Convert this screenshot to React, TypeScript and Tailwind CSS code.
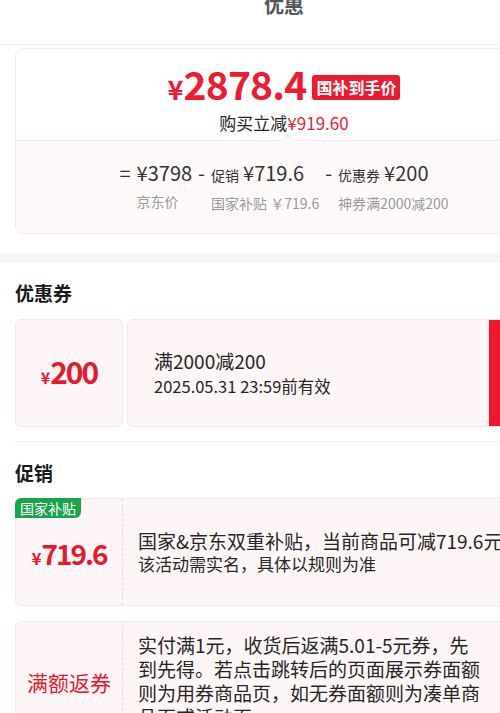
import React from 'react';

const red = 'text-[#f0192f]';

function PriceCard() {
  return (
    <div className="mx-[15px] mt-[3px] overflow-hidden rounded-[8px] border border-[#f6e9e9]">
      <div className="flex flex-col items-center bg-white pt-[12px] pb-[5px]">
        <div className="flex items-center">
          <div className={`flex items-baseline font-semibold ${red}`}>
            <span className="text-[27px] leading-[44px]">¥</span>
            <span className="text-[39px] leading-[44px] tracking-[-0.8px]">2878.4</span>
          </div>
          <span className="ml-[6px] mt-[3px] rounded-[3px] bg-[#ee1a2d] px-[4px] text-[16px] leading-[25px] font-bold text-white">
            国补到手价
          </span>
        </div>
        <div className="text-[17px] leading-[24px] text-[#262626]">
          购买立减<span className={red}>¥919.60</span>
        </div>
      </div>
      <div className="relative border-t border-[#f6eded] bg-[#fdf9f9] pt-[18px] pb-[20px]">
        <div className="absolute -top-[5px] left-[268px] h-[8px] w-[8px] rotate-45 border-l border-t border-[#f6eded] bg-[#fdf9f9]" />
        <div className="flex justify-center gap-[6px] text-[#333]">
          <span className="text-[20px] leading-[28px]">=</span>
          <div className="flex flex-col">
            <span className="text-[20px] leading-[28px]">¥3798</span>
            <span className="mt-[4px] text-[14px] leading-[20px] text-[#999]">京东价</span>
          </div>
          <span className="text-[20px] leading-[28px]">-</span>
          <div className="flex flex-col">
            <span className="text-[20px] leading-[28px]">
              <span className="mr-[4px] text-[14px]">促销</span>¥719.6
            </span>
            <span className="mt-[4px] text-[14px] leading-[20px] text-[#999]">国家补贴 ￥719.6</span>
          </div>
          <span className="text-[20px] leading-[28px]">-</span>
          <div className="flex flex-col">
            <span className="text-[20px] leading-[28px]">
              <span className="mr-[4px] text-[14px]">优惠券</span>¥200
            </span>
            <span className="mt-[4px] text-[14px] leading-[20px] text-[#999]">神券满2000减200</span>
          </div>
        </div>
      </div>
    </div>
  );
}

function Coupon() {
  return (
    <div className="mx-[15px] flex h-[108px] gap-[4px]">
      <div className="flex w-[108px] items-baseline justify-center rounded-[6px] border border-[#fbe6e7] bg-[#fef5f6] pt-[34px] text-[#e8192f]">
        <span className="text-[16px] font-semibold leading-[34px]">¥</span>
        <span className="text-[30px] font-semibold leading-[34px] tracking-[-2px]">200</span>
      </div>
      <div className="flex flex-1 overflow-hidden rounded-[6px] border border-[#fbe6e7] bg-[#fef5f6]">
        <div className="flex flex-1 flex-col justify-center pl-[26px] text-[#262626]">
          <span className="text-[19px] leading-[26px]">满2000减200</span>
          <span className="text-[16.5px] leading-[24px]">2025.05.31 23:59前有效</span>
        </div>
        <div className="w-[63px] bg-[#f2162d]" />
      </div>
    </div>
  );
}

function PromoCard({
  badge,
  left,
  children,
  className,
}: {
  badge?: string;
  left: React.ReactNode;
  children: React.ReactNode;
  className?: string;
}) {
  return (
    <div className={`relative mx-[15px] flex min-h-[108px] rounded-[6px] border border-[#f7e8e9] bg-[#fef6f6] ${className ?? ''}`}>
      {badge && (
        <span className="absolute -left-[1px] -top-[1px] rounded-tl-[6px] rounded-br-[6px] bg-[#16a54a] px-[5px] text-[14px] leading-[20px] text-white">
          {badge}
        </span>
      )}
      <div className="flex w-[107px] shrink-0 items-center justify-center border-r border-dashed border-[#ead9da]">
        {left}
      </div>
      {children}
    </div>
  );
}

export default function App() {
  return (
    <div className="h-[713px] w-full overflow-hidden bg-white font-['Noto_Sans_CJK_SC','Noto_Sans',sans-serif]">
      <div className="w-[568px]">
        <div className="h-[50px] border-b border-[#f0f0f0]">
          <p className="-mt-[5px] text-center text-[20px] font-bold leading-[20px] text-[#555]">优惠</p>
        </div>

        <PriceCard />

        <div className="mt-[19px] h-[10px] bg-[#f5f6fa]" />

        <h2 className="px-[15px] pt-[17px] pb-[13px] text-[19px] font-bold leading-[26px] text-[#1a1a1a]">优惠券</h2>
        <Coupon />

        <div className="mx-[15px] mt-[14px] border-t border-[#f2f2f2]" />

        <h2 className="px-[15px] pt-[18px] pb-[12px] text-[19px] font-bold leading-[26px] text-[#1a1a1a]">促销</h2>

        <PromoCard
          badge="国家补贴"
          left={
            <div className="mt-[4px] flex items-baseline font-semibold text-[#e8192f]">
              <span className="text-[17px]">¥</span>
              <span className="text-[28px] leading-[32px] tracking-[-2px]">719.6</span>
            </div>
          }
        >
          <div className="flex flex-col justify-center whitespace-nowrap pl-[15px] text-[#262626]">
            <span className="text-[19px] leading-[24px]">国家&amp;京东双重补贴，当前商品可减719.6元</span>
            <span className="text-[17px] leading-[22px]">该活动需实名，具体以规则为准</span>
          </div>
        </PromoCard>

        <PromoCard
          className="mt-[15px]"
          left={<span className="text-[21px] leading-[28px] text-[#e8192f]">满额返券</span>}
        >
          <div className="w-[363px] pl-[15px] pt-[11px] pb-[12px] text-[19px] leading-[24px] text-[#262626]">
            实付满1元，收货后返满5.01-5元券，先到先得。若点击跳转后的页面展示券面额则为用券商品页，如无券面额则为凑单商品页或活动页。
          </div>
        </PromoCard>
      </div>
    </div>
  );
}
